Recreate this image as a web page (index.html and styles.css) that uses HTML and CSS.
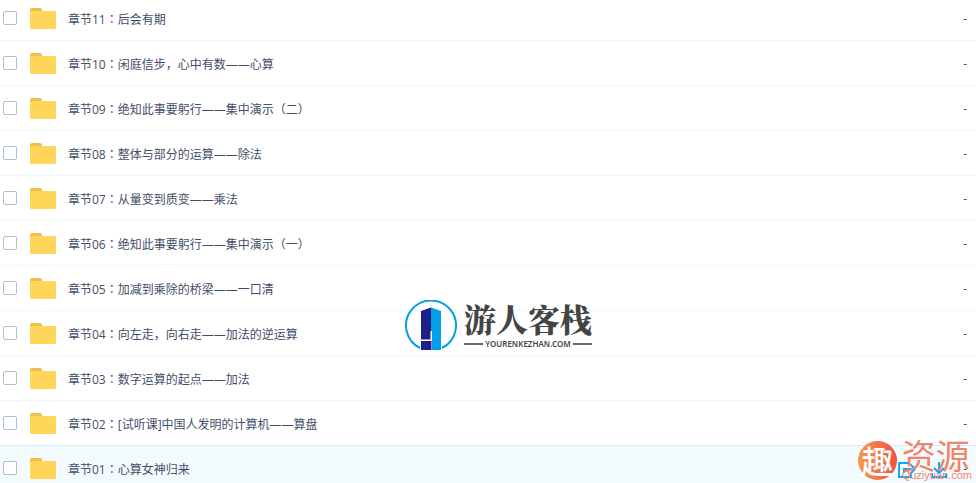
FILE: index.html
```html
<!DOCTYPE html>
<html lang="zh-CN">

<head>
    <meta charset="UTF-8">
    <meta name="viewport" content="width=device-width, initial-scale=1.0">
    <title>章节列表</title>
    <link rel="stylesheet" href="styles.css">
</head>

<body>
    <svg class="symbols" aria-hidden="true">
        <symbol id="folder" viewBox="0 0 26 21">
            <path d="M0 6V2Q0 0 2 0H10Q12 0 12 2V6Z" fill="#edbf4b" />
            <rect y="3" width="26" height="18" rx="1.5" fill="#ffd659" />
        </symbol>
    </svg>

    <ul class="file-list">
        <li class="file-row">
            <input type="checkbox" id="f11" class="file-check">
            <svg class="file-icon"><use href="#folder" /></svg>
            <label for="f11" class="file-name">章节11<span class="colon" lang="zh-TW">：</span>后会有期</label>
            <span class="file-size">-</span>
        </li>
        <li class="file-row">
            <input type="checkbox" id="f10" class="file-check">
            <svg class="file-icon"><use href="#folder" /></svg>
            <label for="f10" class="file-name">章节10<span class="colon" lang="zh-TW">：</span>闲庭信步，心中有数——心算</label>
            <span class="file-size">-</span>
        </li>
        <li class="file-row">
            <input type="checkbox" id="f09" class="file-check">
            <svg class="file-icon"><use href="#folder" /></svg>
            <label for="f09" class="file-name">章节09<span class="colon" lang="zh-TW">：</span>绝知此事要躬行——集中演示（二）</label>
            <span class="file-size">-</span>
        </li>
        <li class="file-row">
            <input type="checkbox" id="f08" class="file-check">
            <svg class="file-icon"><use href="#folder" /></svg>
            <label for="f08" class="file-name">章节08<span class="colon" lang="zh-TW">：</span>整体与部分的运算——除法</label>
            <span class="file-size">-</span>
        </li>
        <li class="file-row">
            <input type="checkbox" id="f07" class="file-check">
            <svg class="file-icon"><use href="#folder" /></svg>
            <label for="f07" class="file-name">章节07<span class="colon" lang="zh-TW">：</span>从量变到质变——乘法</label>
            <span class="file-size">-</span>
        </li>
        <li class="file-row">
            <input type="checkbox" id="f06" class="file-check">
            <svg class="file-icon"><use href="#folder" /></svg>
            <label for="f06" class="file-name">章节06<span class="colon" lang="zh-TW">：</span>绝知此事要躬行——集中演示（一）</label>
            <span class="file-size">-</span>
        </li>
        <li class="file-row">
            <input type="checkbox" id="f05" class="file-check">
            <svg class="file-icon"><use href="#folder" /></svg>
            <label for="f05" class="file-name">章节05<span class="colon" lang="zh-TW">：</span>加减到乘除的桥梁——一口清</label>
            <span class="file-size">-</span>
        </li>
        <li class="file-row">
            <input type="checkbox" id="f04" class="file-check">
            <svg class="file-icon"><use href="#folder" /></svg>
            <label for="f04" class="file-name">章节04<span class="colon" lang="zh-TW">：</span>向左走，向右走——加法的逆运算</label>
            <span class="file-size">-</span>
        </li>
        <li class="file-row">
            <input type="checkbox" id="f03" class="file-check">
            <svg class="file-icon"><use href="#folder" /></svg>
            <label for="f03" class="file-name">章节03<span class="colon" lang="zh-TW">：</span>数字运算的起点——加法</label>
            <span class="file-size">-</span>
        </li>
        <li class="file-row">
            <input type="checkbox" id="f02" class="file-check">
            <svg class="file-icon"><use href="#folder" /></svg>
            <label for="f02" class="file-name">章节02<span class="colon" lang="zh-TW">：</span>[试听课]中国人发明的计算机——算盘</label>
            <span class="file-size">-</span>
        </li>
        <li class="file-row active">
            <input type="checkbox" id="f01" class="file-check">
            <svg class="file-icon"><use href="#folder" /></svg>
            <label for="f01" class="file-name">章节01<span class="colon" lang="zh-TW">：</span>心算女神归来</label>
            <div class="file-actions">
                <button class="action-button" aria-label="分享">
                    <svg viewBox="0 0 18 18">
                        <path d="M11 2H1V16H13V13M6 12V8H16M12 3L17 8L12 13" />
                    </svg>
                </button>
                <button class="action-button" aria-label="下载">
                    <svg viewBox="0 0 18 18">
                        <path d="M9 1V12M4 7L9 12L14 7M2 12V16H16V12" />
                    </svg>
                </button>
            </div>
            <span class="file-size">-</span>
        </li>
    </ul>

    <!-- watermarks over the list -->
    <div class="watermark inn-mark">
        <svg class="inn-logo" viewBox="0 0 52 52">
            <path d="M15 48A25 25 0 1 1 37 48" fill="none" stroke="#009fe8" stroke-width="2" />
            <path d="M16 11L26 7.500V31H25.500V39.500H16Z" fill="#1d2088" />
            <path d="M26 7.500L36 11V50H27V31H26Z" fill="#009fe8" />
            <path d="M16 41H26.500V50H16Z" fill="#1d2088" />
        </svg>
        <div class="inn-text">
            <span class="inn-name">游人客栈</span>
            <span class="inn-site">YOURENKEZHAN.COM</span>
        </div>
    </div>

    <div class="watermark qu-mark">
        <span class="qu-logo">趣</span>
        <div class="qu-text">
            <span class="qu-name">资源</span>
            <span class="qu-site">Quziyuan.com</span>
        </div>
    </div>
</body>

</html>
```
FILE: styles.css
```css
body {
    margin: 0;
    overflow: hidden;
    background-color: #fff;
    color: #424e67;
    font-family: "Open Sans", "Noto Sans CJK SC", sans-serif;
    font-size: 12px;
}

.symbols {
    display: none;
}

.file-list {
    list-style: none;
    margin: -4px 0 0;
    padding: 0;
}

.file-row {
    display: flex;
    align-items: center;
    height: 44px;
    padding: 0 9px 0 3px;
    border-bottom: 1px solid #f2f6fd;
}

.file-row:nth-last-child(2) {
    border-bottom-color: #d8eaf7;
}

.file-row.active {
    background-color: #f4fbff;
}

.file-check {
    appearance: none;
    width: 14px;
    height: 14px;
    margin: 0 13px 0 0;
    border: 1px solid #afbfce;
    border-radius: 2px;
    background-color: #fff;
}

.file-icon {
    width: 26px;
    height: 21px;
    margin-right: 12px;
}

.file-name {
    flex: 1;
    padding-top: 2px;
    line-height: 18px;
}

.colon {
    font-family: "Noto Sans CJK TC", sans-serif;
}

.file-actions {
    display: flex;
    gap: 14px;
    margin: 4px 15px 0 0;
}

.action-button {
    width: 18px;
    height: 18px;
    padding: 0;
    border: none;
    background: none;
}

.action-button svg {
    display: block;
    fill: none;
    stroke: #09aaff;
    stroke-width: 2;
}

.file-size {
    padding-top: 2px;
    line-height: 18px;
}

.watermark {
    position: absolute;
    display: flex;
    pointer-events: none;
}

.inn-mark {
    top: 300px;
    left: 405px;
    gap: 7px;
}

.inn-logo {
    width: 52px;
    height: 52px;
}

.inn-text {
    display: flex;
    flex-direction: column;
    color: #444;
}

.inn-name {
    font-family: "Noto Serif CJK SC", "Noto Sans CJK SC", serif;
    font-size: 32px;
    font-weight: 900;
    line-height: 36px;
}

.inn-site {
    display: flex;
    align-items: center;
    gap: 2px;
    font-family: "Noto Sans", sans-serif;
    font-size: 8px;
    font-weight: 600;
    line-height: 16px;
}

.inn-site::before,
.inn-site::after {
    content: "";
    flex: 1;
    height: 2px;
    background-color: #666;
}

.qu-mark {
    right: 4px;
    bottom: 3px;
    gap: 5px;
    align-items: center;
}

.qu-logo {
    width: 39px;
    height: 39px;
    border-radius: 50%;
    background: linear-gradient(90deg, #f89a48, #ee5148);
    color: #fff;
    font-family: "Noto Sans CJK SC", sans-serif;
    font-size: 32px;
    font-weight: 500;
    line-height: 38px;
    text-align: center;
}

.qu-text {
    display: flex;
    flex-direction: column;
    color: #ef8468;
}

.qu-name {
    font-family: "Noto Sans CJK SC", sans-serif;
    font-size: 34px;
    line-height: 30px;
}

.qu-site {
    font-family: "Liberation Sans", sans-serif;
    font-size: 11px;
    line-height: 10px;
}
```
